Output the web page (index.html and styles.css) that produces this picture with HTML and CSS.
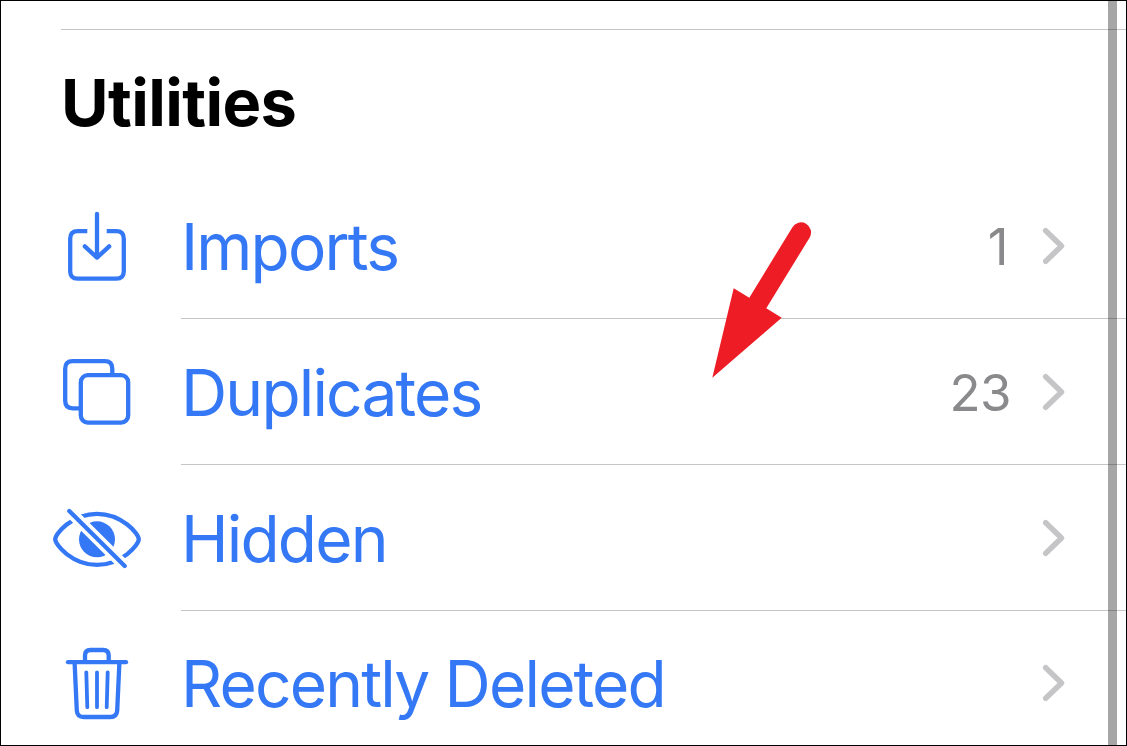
FILE: index.html
```html
<!DOCTYPE html>
<html lang="en">
<head>
    <meta charset="UTF-8">
    <meta name="viewport" content="width=device-width, initial-scale=1.0">
    <title>Utilities</title>
    <link rel="stylesheet" href="styles.css">
</head>
<body>
<div class="screen">
    <div class="header">
        <h1>Utilities</h1>
    </div>

    <ul class="list">
        <li class="row">
            <svg class="icon" viewBox="0 0 120 120">
                <path d="M50.3 45.2H40.7Q33.2 45.2 33.2 52.7V85.2Q33.2 92.7 40.7 92.7H79.3Q86.8 92.7 86.8 85.2V52.7Q86.8 45.2 79.3 45.2H69.7"/>
                <path class="round" d="M60 28V71.4M47.8 60.4L60 71.6L72.2 60.4"/>
            </svg>
            <div class="content">
                <span class="label">Imports</span>
                <span class="count single">1</span>
                <svg class="chevron" viewBox="0 0 40 40"><path d="M12.7 4.7L28.5 20L12.7 35.3"/></svg>
            </div>
        </li>
        <li class="row">
            <svg class="icon" viewBox="0 0 120 120">
                <path d="M43.8 76.3H35.7Q28.2 76.3 28.2 68.8V36.7Q28.2 29.2 35.7 29.2H67.8Q75.3 29.2 75.3 36.7V43.2"/>
                <rect x="43.8" y="43.2" width="47.4" height="47.4" rx="7"/>
            </svg>
            <div class="content">
                <span class="label">Duplicates</span>
                <span class="count">23</span>
                <svg class="chevron" viewBox="0 0 40 40"><path d="M12.7 4.7L28.5 20L12.7 35.3"/></svg>
            </div>
        </li>
        <li class="row">
            <svg class="icon" viewBox="0 0 120 120">
                <path d="M18.2 61.3C18.2 56 35 35.8 60 35.8S101.8 56 101.8 61.3S85 86.9 60 86.9S18.2 66.6 18.2 61.3Z"/>
                <circle class="pupil" cx="60" cy="61.3" r="18"/>
                <path class="gap" d="M32.3 33L87.7 88"/>
                <path class="round" d="M32.3 33L87.7 88"/>
            </svg>
            <div class="content">
                <span class="label">Hidden</span>
                <svg class="chevron" viewBox="0 0 40 40"><path d="M12.7 4.7L28.5 20L12.7 35.3"/></svg>
            </div>
        </li>
        <li class="row last">
            <svg class="icon" viewBox="0 0 120 120">
                <path class="round" d="M31 38.2H89"/>
                <path d="M48 38V31.5Q48 26 53.5 26H66.2Q71.7 26 71.7 31.5V38"/>
                <path d="M37.6 38.5L39.8 86.5Q40.2 93 46.7 93H73.3Q79.8 93 80.2 86.5L82.4 38.5"/>
                <path class="thin" d="M49.3 48.3L50.3 83.2M60 48.3V83.2M70.7 48.3L69.7 83.2"/>
            </svg>
            <div class="content">
                <span class="label">Recently Deleted</span>
                <svg class="chevron" viewBox="0 0 40 40"><path d="M12.7 4.7L28.5 20L12.7 35.3"/></svg>
            </div>
        </li>
    </ul>

    <div class="scrollbar"></div>
    <svg class="arrow" viewBox="0 0 110 170">
        <path d="M12.3 177.7L33.7 88.3L49.3 97.7L92.3 27.4A10 10 0 0 1 109.7 37.4L66.3 108.3L81.7 117.7Z"/>
    </svg>
</div>
</body>
</html>
```

FILE: styles.css
```css
* {
    margin: 0;
    padding: 0;
    box-sizing: border-box;
}

body {
    font-family: Inter, "Liberation Sans", sans-serif;
    background-color: #ffffff;
    overflow: hidden;
}

.screen {
    position: relative;
    width: 1127px;
    height: 746px;
    border: 1px solid #000000;
    overflow: hidden;
}

/* Section title */
.header {
    height: 144px;
    margin: 28px 0 0 60px;
    border-top: 1px solid #c6c6c6;
    padding-top: 33px;
}

.header h1 {
    font-size: 65px;
    line-height: 80px;
    font-weight: 700;
    letter-spacing: -0.6px;
    color: #000000;
}

/* Rows */
.list {
    list-style: none;
}

.row {
    display: flex;
    height: 146px;
}

.row.last {
    height: 144px;
}

.icon {
    flex: none;
    width: 120px;
    height: 120px;
    margin: 13px 24px 0 36px;
    fill: none;
    stroke: #3478f6;
    stroke-width: 4.3;
}

.icon .round {
    stroke-linecap: round;
    stroke-linejoin: round;
}

.icon .thin {
    stroke-width: 3.8;
    stroke-linecap: round;
}

.icon .pupil {
    fill: #3478f6;
    stroke: none;
}

.icon .gap {
    stroke: #ffffff;
    stroke-width: 11.6;
}

.content {
    flex: 1;
    display: flex;
    align-items: center;
    border-bottom: 1px solid #c6c6c6;
    padding-right: 53px;
}

.last .content {
    border-bottom-color: transparent;
}

.label {
    flex: 1;
    padding-top: 2px;
    font-size: 64px;
    line-height: 80px;
    letter-spacing: -1.82px;
    color: #3478f6;
    white-space: nowrap;
}

.count {
    padding-top: 2px;
    font-size: 51px;
    line-height: 64px;
    letter-spacing: -0.6px;
    color: #8a8a8c;
    margin-right: 22px;
}

.count.single {
    margin-right: 25px;
}

.chevron {
    flex: none;
    width: 40px;
    height: 40px;
    fill: none;
    stroke: #c5c5c7;
    stroke-width: 5.5;
    stroke-linecap: round;
    stroke-linejoin: round;
}

.scrollbar {
    position: absolute;
    top: 0;
    right: 9px;
    width: 9px;
    height: 100%;
    background-color: rgba(0, 0, 0, 0.35);
}

/* Pointer drawn over the list */
.arrow {
    position: absolute;
    left: 699px;
    top: 199px;
    width: 110px;
    height: 170px;
    overflow: visible;
    fill: #ee1c25;
}
```
